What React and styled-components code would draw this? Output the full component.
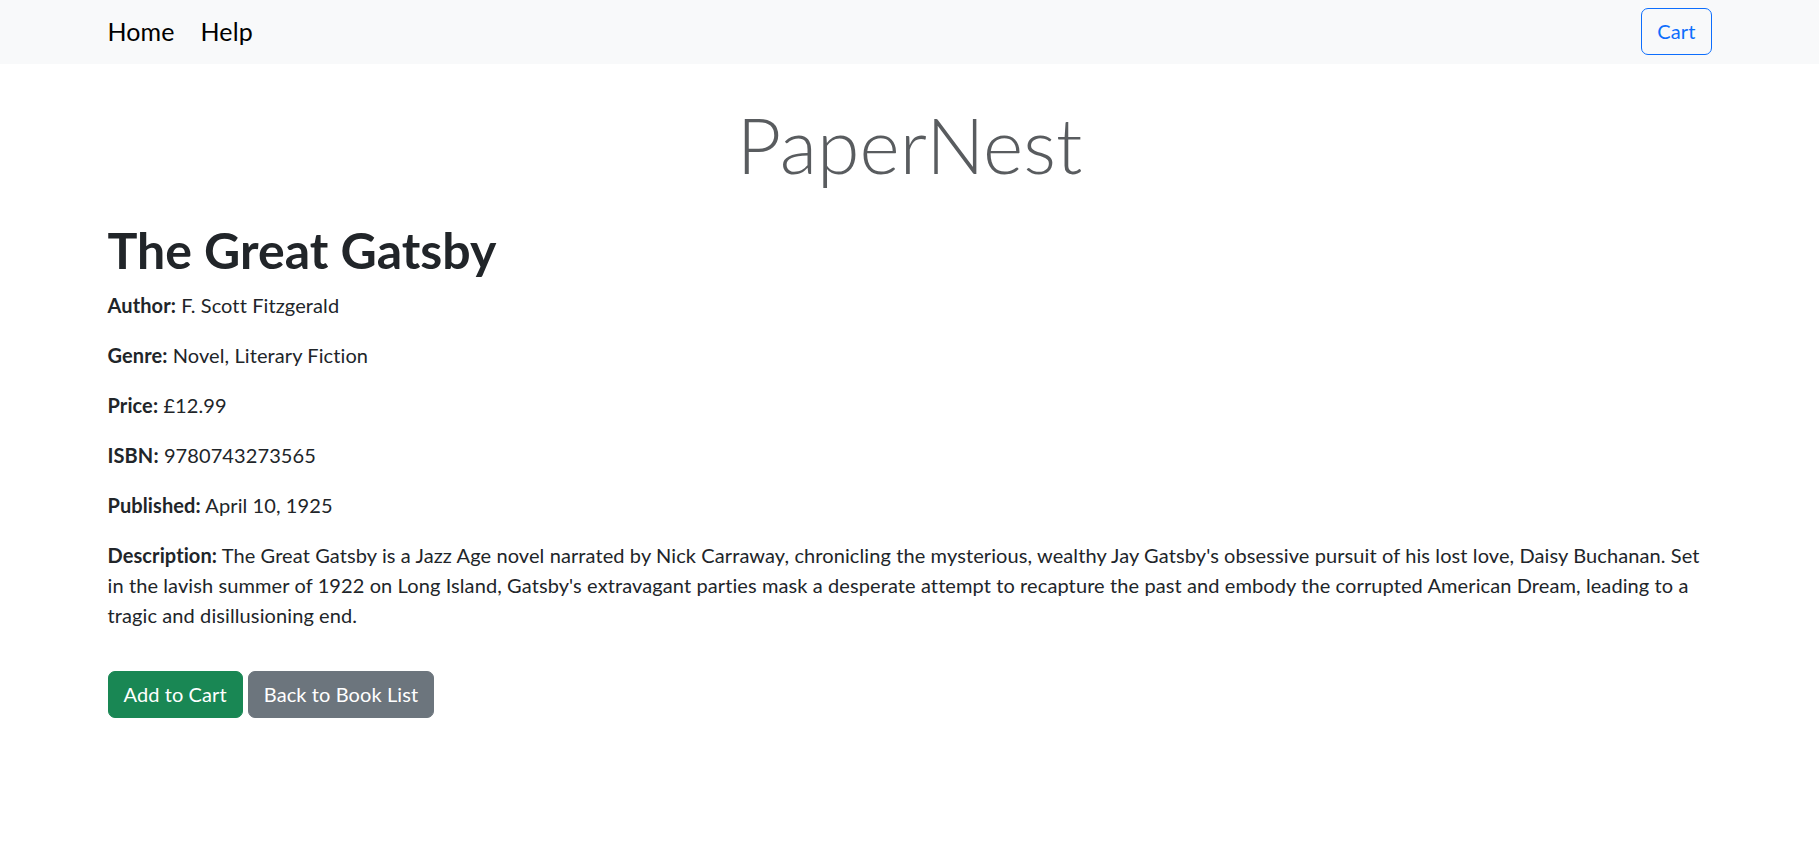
import styled, { createGlobalStyle } from "styled-components";

const GlobalStyle = createGlobalStyle`
  body {
    margin: 0;
    font-family: Lato, "Open Sans", sans-serif;
    font-size: 20px;
    line-height: 1.5;
    letter-spacing: 0.1px;
    color: #212529;
    background: #fff;
  }
  * {
    box-sizing: border-box;
  }
`;

const Navbar = styled.nav`
  background: #f8f9fa;
  height: 64px;
`;

const NavInner = styled.div`
  max-width: 1604px;
  margin: 0 auto;
  height: 100%;
  display: flex;
  align-items: center;
  justify-content: space-between;
`;

const NavLinks = styled.div`
  display: flex;
  gap: 26px;
`;

const NavLink = styled.a`
  font-size: 25px;
  color: #000;
  text-decoration: none;
  cursor: pointer;
`;

const CartButton = styled.button`
  font-family: inherit;
  font-size: 20px;
  line-height: 29px;
  letter-spacing: inherit;
  padding: 8px 15px;
  margin-top: -2px;
  color: #0d6efd;
  background: transparent;
  border: 1px solid #0d6efd;
  border-radius: 7px;
  cursor: pointer;
`;

const Container = styled.main`
  max-width: 1604px;
  margin: 0 auto;
`;

const Brand = styled.h1`
  text-align: center;
  font-size: 77px;
  font-weight: 300;
  line-height: 1.2;
  letter-spacing: 0;
  color: rgba(33, 37, 41, 0.75);
  margin: 34px 0 30px;
`;

const Title = styled.h2`
  font-size: 50px;
  font-weight: 700;
  line-height: 1.2;
  letter-spacing: 0;
  margin: 0 0 10px;
`;

const Field = styled.p`
  margin: 0 0 20px;
`;

const Actions = styled.div`
  display: flex;
  gap: 5px;
  margin-top: 41px;
`;

const Button = styled.button`
  font-family: inherit;
  font-size: 20px;
  line-height: 29px;
  letter-spacing: inherit;
  padding: 8px 15px;
  color: #fff;
  background: ${(p) => (p.$variant === "success" ? "#198754" : "#6c757d")};
  border: 1px solid ${(p) => (p.$variant === "success" ? "#198754" : "#6c757d")};
  border-radius: 7px;
  cursor: pointer;
`;

const book = {
  title: "The Great Gatsby",
  fields: [
    ["Author", "F. Scott Fitzgerald"],
    ["Genre", "Novel, Literary Fiction"],
    ["Price", "£12.99"],
    ["ISBN", "9780743273565"],
    ["Published", "April 10, 1925"],
    [
      "Description",
      "The Great Gatsby is a Jazz Age novel narrated by Nick Carraway, chronicling the mysterious, wealthy Jay Gatsby's obsessive pursuit of his lost love, Daisy Buchanan. Set in the lavish summer of 1922 on Long Island, Gatsby's extravagant parties mask a desperate attempt to recapture the past and embody the corrupted American Dream, leading to a tragic and disillusioning end.",
    ],
  ],
};

const App = () => {
  return (
    <>
      <GlobalStyle />
      <Navbar>
        <NavInner>
          <NavLinks>
            <NavLink>Home</NavLink>
            <NavLink>Help</NavLink>
          </NavLinks>
          <CartButton>Cart</CartButton>
        </NavInner>
      </Navbar>
      <Container>
        <Brand>PaperNest</Brand>
        <Title>{book.title}</Title>
        {book.fields.map(([label, value]) => (
          <Field key={label}>
            <strong>{label}:</strong> {value}
          </Field>
        ))}
        <Actions>
          <Button $variant="success">Add to Cart</Button>
          <Button $variant="secondary">Back to Book List</Button>
        </Actions>
      </Container>
    </>
  );
};

export default App;
